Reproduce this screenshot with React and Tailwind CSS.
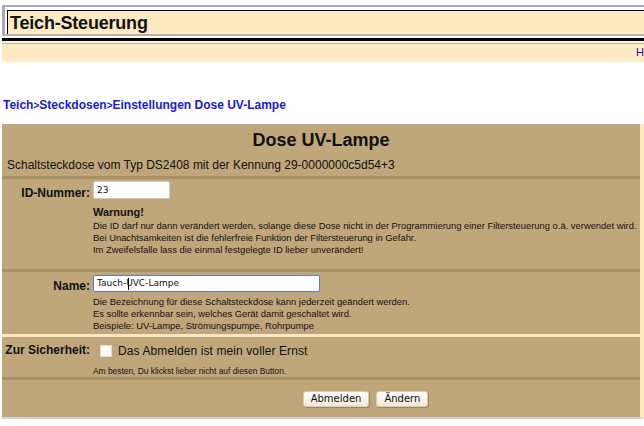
import React from 'react'

const peach = 'bg-[#fde9c2]'

const Header = () => (
  <div className="pt-[5px] pl-[2px]">
    <div className="border-t-2 border-l-[3px] border-[#acacb0] pt-[3px] pl-[2px] bg-white">
      <div className={`border-t border-l border-black ${peach} h-[24px] pl-[2px] flex items-center`}>
        <h1 className="text-[18px] font-bold text-[#111] leading-none tracking-[-0.2px]">
          Teich-Steuerung
        </h1>
      </div>
    </div>
    <div className="h-[2px] bg-[#b4b4b8]" />
    <div className="h-[2px] bg-white" />
    <div className="h-[3px] bg-black" />
    <div className="h-[2px] bg-[#fbf1de]" />
    <div className="h-px bg-[#b9b4a8]" />
    <div className={`h-[17px] ${peach} pl-[634px] whitespace-nowrap overflow-hidden text-[11px] leading-[17px] text-[#2a12a8]`}>
      Home
    </div>
    <div className="h-[2px] bg-[#fbf3ea]" />
  </div>
)

const Crumbs = () => (
  <nav className="mt-[35px] pl-[3px] text-[12px] font-bold text-[#1a1ad0] leading-[15px]">
    <a href="#">Teich</a>
    <span className="text-[10px]">&gt;</span>
    <a href="#">Steckdosen</a>
    <span className="text-[10px]">&gt;</span>
    <a href="#">Einstellungen Dose UV-Lampe</a>
  </nav>
)

const Divider = () => <div className="col-span-2 h-[3px] bg-[#a89063]" />

const Label = ({ children, top }) => (
  <div className={`pr-[3px] text-right text-[12px] font-bold text-[#111] ${top}`}>{children}</div>
)

const Hint = ({ lines }) => (
  <div className="text-[9.4px] leading-[12px] text-[#111]">
    {lines.map((l) => (
      <p key={l}>{l}</p>
    ))}
  </div>
)

const Button = ({ children }) => (
  <button className="h-[16px] px-[7px] rounded-[3px] bg-gradient-to-b from-white to-[#f1e8d6] border border-[#d8ccb4] shadow-[1px_1px_0_#9c8660] text-[10px] font-['DejaVu_Sans',sans-serif] text-[#111] leading-none">
    {children}
  </button>
)

export default function App() {
  return (
    <div className="w-[644px] h-[426px] overflow-hidden bg-white font-['Liberation_Sans',Arial,sans-serif]">
      <Header />
      <Crumbs />

      <div className="mt-[11px] ml-[2px] w-[642px] border-r-4 border-[#fde9c2] border-b-2 border-b-[#d6d2cc] bg-[#bfa77b]">
        <h2 className="h-[30px] pt-[5px] text-center text-[18px] font-bold text-[#111] leading-[22px]">
          Dose UV-Lampe
        </h2>
        <p className="h-[22px] pl-[5px] text-[12px] leading-[22px] text-[#111]">
          Schaltsteckdose vom Typ DS2408 mit der Kennung 29-0000000c5d54+3
        </p>

        <div className="grid grid-cols-[91px_1fr]">
          <Divider />

          {/* ID */}
          <Label top="pt-[5px]">ID-Nummer:</Label>
          <div className="h-[90px] pt-[2px]">
            <input
              defaultValue="23"
              className="block w-[77px] h-[18px] px-[3px] bg-white border border-[#cfc8bc] rounded-[2px] text-[9px] font-['DejaVu_Sans',sans-serif] text-[#111] outline-none"
            />
            <p className="mt-[7px] text-[11px] font-bold text-[#111] leading-[13px]">Warnung!</p>
            <div className="mt-[1px]">
              <Hint
                lines={[
                  'Die ID darf nur dann verändert werden, solange diese Dose nicht in der Programmierung einer Filtersteuerung o.ä. verwendet wird.',
                  'Bei Unachtsamkeiten ist die fehlerfreie Funktion der Filtersteuerung in Gefahr.',
                  'Im Zweifelsfalle lass die einmal festgelegte ID lieber unverändert!',
                ]}
              />
            </div>
          </div>

          <Divider />

          {/* Name */}
          <Label top="pt-[5px]">Name:</Label>
          <div className="h-[62px] pt-[3px]">
            <div className="relative w-[227px] h-[17px] bg-white border border-[#5d7fbf] rounded-[2px]">
              <span className="absolute left-[3px] top-[2px] text-[9px] font-['DejaVu_Sans',sans-serif] text-[#111] leading-[11px]">
                Tauch-UVC-Lampe
              </span>
              <span className="absolute left-[34px] top-[2px] w-px h-[12px] bg-black" />
            </div>
            <div className="mt-[4px]">
              <Hint
                lines={[
                  'Die Bezeichnung für diese Schaltsteckdose kann jederzeit geändert werden.',
                  'Es sollte erkennbar sein, welches Gerät damit geschaltet wird.',
                  'Beispiele: UV-Lampe, Strömungspumpe, Rohrpumpe',
                ]}
              />
            </div>
          </div>

          <div className="col-span-2 h-[3px] bg-[#fbe8c3]" />

          {/* Abmelden */}
          <Label top="pt-[4px] pl-[3px] text-left">Zur Sicherheit:</Label>
          <div className="h-[40px] pt-[7px]">
            <label className="flex items-center gap-[6px] pl-[7px]">
              <span className="w-[12px] h-[12px] bg-[#fbfaf6] border border-[#e4dccb]" />
              <span className="text-[12px] text-[#111] tracking-[0.1px] leading-[14px]">
                Das Abmelden ist mein voller Ernst
              </span>
            </label>
            <p className="mt-[8px] text-[8.4px] text-[#111] leading-[10px]">
              Am besten, Du klickst lieber nicht auf diesen Button.
            </p>
          </div>

          <Divider />

          <div />
          <div className="h-[37px] flex items-center justify-center gap-[7px] pr-[2px]">
            <Button>Abmelden</Button>
            <Button>Ändern</Button>
          </div>
        </div>
      </div>
    </div>
  )
}
